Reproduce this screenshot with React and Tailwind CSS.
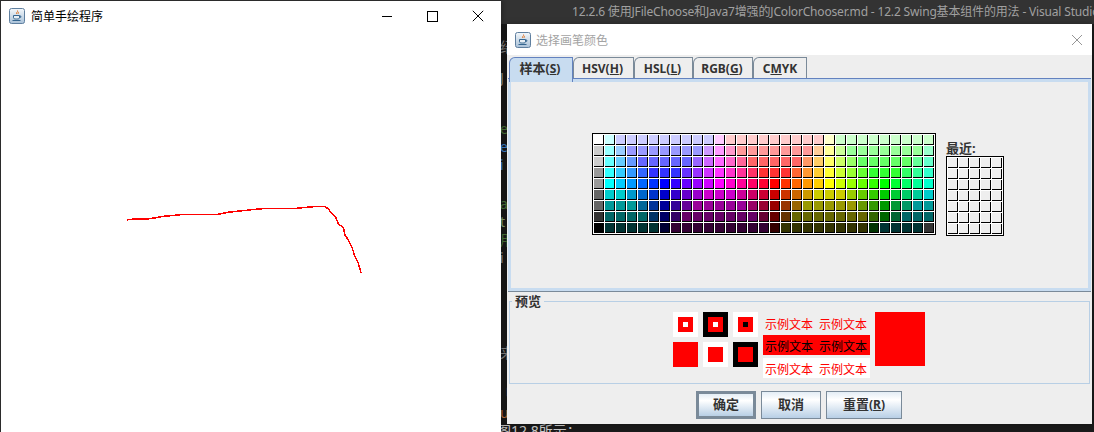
import React from "react";

const r = (c, n = 1) => Array(n).fill(c);
const rows = [
  [[255,255,255],[204,255,255],...r([204,204,255],9),[255,204,255],...r([255,204,204],9),[255,255,204],...r([204,255,204],9)],
  [[204,204,204],[153,255,255],[153,204,255],...r([153,153,255],7),[204,153,255],[255,153,255],[255,153,204],...r([255,153,153],7),[255,204,153],[255,255,153],[204,255,153],...r([153,255,153],7),[153,255,204]],
  [[204,204,204],[102,255,255],[102,204,255],[102,153,255],...r([102,102,255],5),[153,102,255],[204,102,255],[255,102,255],[255,102,204],[255,102,153],...r([255,102,102],5),[255,153,102],[255,204,102],[255,255,102],[204,255,102],[153,255,102],...r([102,255,102],5),[102,255,153],[102,255,204]],
  [[153,153,153],[51,255,255],[51,204,255],[51,153,255],[51,102,255],...r([51,51,255],3),[102,51,255],[153,51,255],[204,51,255],[255,51,255],[255,51,204],[255,51,153],[255,51,102],...r([255,51,51],3),[255,102,51],[255,153,51],[255,204,51],[255,255,51],[204,255,51],[153,255,51],[102,255,51],...r([51,255,51],3),[51,255,102],[51,255,153],[51,255,204]],
  [[153,153,153],[0,255,255],[0,204,255],[0,153,255],[0,102,255],[0,51,255],[0,0,255],[51,0,255],[102,0,255],[153,0,255],[204,0,255],[255,0,255],[255,0,204],[255,0,153],[255,0,102],[255,0,51],[255,0,0],[255,51,0],[255,102,0],[255,153,0],[255,204,0],[255,255,0],[204,255,0],[153,255,0],[102,255,0],[51,255,0],[0,255,0],[0,255,51],[0,255,102],[0,255,153],[0,255,204]],
  [[102,102,102],[0,204,204],[0,204,204],[0,153,204],[0,102,204],[0,51,204],[0,0,204],[51,0,204],[102,0,204],[153,0,204],[204,0,204],[204,0,204],[204,0,204],[204,0,153],[204,0,102],[204,0,51],[204,0,0],[204,51,0],[204,102,0],[204,153,0],[204,204,0],[204,204,0],[204,204,0],[153,204,0],[102,204,0],[51,204,0],[0,204,0],[0,204,51],[0,204,102],[0,204,153],[0,204,204]],
  [[102,102,102],...r([0,153,153],3),[0,102,153],[0,51,153],[0,0,153],[51,0,153],[102,0,153],...r([153,0,153],5),[153,0,102],[153,0,51],[153,0,0],[153,51,0],[153,102,0],...r([153,153,0],5),[102,153,0],[51,153,0],[0,153,0],[0,153,51],[0,153,102],...r([0,153,153],2)],
  [[51,51,51],...r([0,102,102],4),[0,51,102],[0,0,102],[51,0,102],...r([102,0,102],7),[102,0,51],[102,0,0],[102,51,0],...r([102,102,0],7),[51,102,0],[0,102,0],[0,102,51],...r([0,102,102],3)],
  [[0,0,0],...r([0,51,51],5),[0,0,51],...r([51,0,51],9),[51,0,0],...r([51,51,0],8),[0,51,0],...r([0,51,51],4),[51,51,51]],
];

const cjk = { fontFamily: '"Noto Sans CJK SC", sans-serif' };
const mixed = { fontFamily: '"Noto Sans", "Noto Sans CJK SC", sans-serif' };

function JavaIcon() {
  return (
    <svg width="16" height="16" viewBox="0 0 16 16" className="shrink-0">
      <defs>
        <linearGradient id="jg" x1="0" y1="0" x2="0" y2="1">
          <stop offset="0" stopColor="#f4f8fb" />
          <stop offset="1" stopColor="#a9c1d8" />
        </linearGradient>
      </defs>
      <rect x="0.5" y="0.5" width="15" height="15" rx="2" fill="url(#jg)" stroke="#5f7f9f" />
      <path d="M8.5 2.5c1 1.2-1.8 2-.8 3.4M10 4c-1 .8-1.2 1.2-.5 2" stroke="#e0762a" strokeWidth="1" fill="none" />
      <path d="M4.5 7.5h6v2.2c0 1-1 1.3-3 1.3s-3-.3-3-1.3zM10.5 8h1.3v1.3h-1.3" stroke="#35658f" strokeWidth="1" fill="#e8eff5" />
      <path d="M3.5 12.5h8" stroke="#35658f" strokeWidth="1" />
    </svg>
  );
}

function Swatch({ c }) {
  return <div className="w-[10px] h-[10px] border-r border-b border-black" style={{ backgroundColor: c }} />;
}

function Tab({ children, selected, w, noPad }) {
  return (
    <div
      className={
        (selected
          ? "relative z-10 h-[25px] -mb-[4px] border-b-0 border-[#6382bf] bg-[#c8dcf0] "
          : "h-[22px] border-[#7a8a99] border-b-[#6382bf] bg-[#eeeeee] ") +
        (noPad ? "" : "pr-[2px] ") +
        "flex items-start pt-[2px] justify-center border rounded-tl-[6px] text-[12px] font-bold leading-[17px] text-[#333333]"
      }
      style={{ ...mixed, width: w }}
    >
      {children}
    </div>
  );
}

function Btn({ w, def, children }) {
  return (
    <div
      className={`h-[28px] flex items-center justify-center bg-gradient-to-b from-[#e4edf5] via-[#ffffff] via-30% to-[#b8cfe5] text-[13px] font-bold text-[#333333] border-[#7a8a99] ${def ? "border-[3px]" : "border"}`}
      style={{ ...mixed, width: w }}
    >
      {children}
    </div>
  );
}

function Sq({ outer, mid, inner }) {
  return (
    <div className="w-[25px] h-[25px] flex items-center justify-center" style={{ backgroundColor: outer }}>
      {mid && (
        <div className="w-[15px] h-[15px] flex items-center justify-center" style={{ backgroundColor: mid }}>
          {inner && <div className="w-[5px] h-[5px]" style={{ backgroundColor: inner }} />}
        </div>
      )}
    </div>
  );
}

function SampleRow({ cls }) {
  return (
    <div className={`h-[20px] w-[107px] flex items-center pl-[2px] pt-[2px] gap-[6px] text-[12px] leading-[18px] ${cls}`} style={cjk}>
      <span>示例文本</span>
      <span>示例文本</span>
    </div>
  );
}

const fragments = [
  ["绍", 38, "#8a8a8a"], ["J", 69, "#9a9a9a"], ["e", 120, "#4d7a3c"], ["e", 138, "#3f86d6"], ["i", 156, "#3f86d6"],
  ["a", 195, "#4d7a3c"], ["t", 213, "#8aa878"], ["用", 231, "#4d7a3c"], ["i", 249, "#9a9a9a"], ["来", 344, "#8a8a8a"],
  ["刂", 384, "#8a8a8a"], ["u", 404, "#c0703a"],
];

const stroke = "127.3,220.3 129,219.3 147.7,219 156,217.7 163.3,216.3 171,215.7 185,214.3 217.7,214.3 227.7,212.3 236.7,211.3 246.7,210.3 255,209.3 263.3,208.7 296.7,208.3 313.3,206.7 325,206.3 328.3,209 331.7,213.3 336,217.7 338.3,224 343.3,227.3 345,235 348.3,240 352.3,248.3 355,256.7 358.3,263.3 361,273";

export default function App() {
  return (
    <div className="relative w-[1094px] h-[432px] overflow-hidden bg-[#1a1a1a]">
      {/* Editor behind the windows */}
      <div className="h-[24px] bg-[#333333] pl-[572px] flex items-center overflow-hidden whitespace-nowrap text-[12px] tracking-[-0.17px] text-[#a0a0a0]" style={mixed}>
        12.2.6 使用JFileChoose和Java7增强的JColorChooser.md - 12.2 Swing基本组件的用法 - Visual Studio
      </div>
      {fragments.map(([t, y, c], i) => (
        <span key={i} className="absolute left-[500px] text-[14px] leading-[18px]" style={{ ...mixed, top: y, color: c }}>
          {t}
        </span>
      ))}
      <div className="absolute left-[497px] top-[423px] text-[14px] leading-[16px] text-[#c8c8c8]" style={mixed}>
        图12.8所示：
      </div>

      {/* Drawing window */}
      <div className="absolute left-0 top-0 w-[501px] h-[432px] bg-white border-l border-t border-[#2b2b2b] shadow-[2px_0_6px_rgba(0,0,0,0.25)]">
        <div className="h-[30px] flex items-center pl-[8px] text-[12px] text-black" style={cjk}>
          <JavaIcon />
          <span className="ml-[6px]">简单手绘程序</span>
          <svg width="56" height="12" viewBox="0 0 56 12" className="ml-auto" stroke="#000" strokeWidth="1" fill="none" shapeRendering="crispEdges">
            <path d="M0 6.5h10" />
            <rect x="45.5" y="1.5" width="10" height="10" />
          </svg>
          <svg width="12" height="12" viewBox="0 0 12 12" className="ml-[34px] mr-[17px]" stroke="#000" strokeWidth="1" fill="none">
            <path d="M.8.8l10.4 10.4M11.2.8L.8 11.2" />
          </svg>
        </div>
        <svg className="absolute -left-px -top-px" width="500" height="432" fill="none" stroke="#ff0000" strokeWidth="1.5" shapeRendering="crispEdges">
          <polyline points={stroke} />
        </svg>
      </div>

      {/* Colour chooser dialog */}
      <div className="absolute left-[507px] top-[24px] w-[585px] h-[400px] bg-[#eeeeee] flex flex-col shadow-[0_0_6px_rgba(0,0,0,0.3)]">
        <div className="h-[31px] bg-white flex items-center pl-[8px] pr-[10px] text-[12px] text-[#a3a3a3]" style={cjk}>
          <JavaIcon />
          <span className="ml-[5px]">选择画笔颜色</span>
          <svg width="10" height="10" viewBox="0 0 10 10" className="ml-auto" stroke="#8a8a8a" strokeWidth="0.9" fill="none">
            <path d="M0 0l10 10M10 0L0 10" />
          </svg>
        </div>

        <div className="flex pl-[2px] pt-[2px]">
          <Tab selected w={64}>
            <span><span className="text-[13px]">样本</span>(<u>S</u>)</span>
          </Tab>
          <Tab w={61}><span>HSV(<u>H</u>)</span></Tab>
          <Tab w={59}><span>HSL(<u>L</u>)</span></Tab>
          <Tab w={60}><span>RGB(<u>G</u>)</span></Tab>
          <Tab w={54} noPad><span>C<u>M</u>YK</span></Tab>
        </div>

        <div className="mx-[1px] h-[214px] -mt-px border-t border-b border-t-[#6382bf] border-b-[#7a8a99]">
          <div className="h-full border-[3px] border-t-[3px] border-[#c8dcf0] flex items-end pl-[81px] pb-[53px] gap-[10px]">
            <div className="grid grid-cols-[repeat(31,10px)] gap-[1px] p-[1px] bg-white border border-black">
              {rows.flat().map((c, i) => (
                <Swatch key={i} c={`rgb(${c[0]},${c[1]},${c[2]})`} />
              ))}
            </div>
            <div className="flex flex-col -mb-[1px]">
              <div className="text-[13px] font-bold leading-[16px] text-[#333333]" style={mixed}>最近:</div>
              <div className="grid grid-cols-[repeat(5,10px)] gap-[1px] p-[1px] bg-white border border-black">
                {Array.from({ length: 35 }).map((_, i) => (
                  <Swatch key={i} c="#eeeeee" />
                ))}
              </div>
            </div>
          </div>
        </div>

        <div className="relative mx-[2px] mt-[9px] h-[83px] border border-[#b8cfe5] pl-[163px] pt-[10px] flex">
          <div className="absolute left-[2px] -top-[9px] px-[3px] bg-[#eeeeee] text-[13px] font-bold leading-[16px] text-[#333333]" style={cjk}>预览</div>
          <div className="grid grid-cols-[25px_25px_25px] grid-rows-[25px_25px] gap-[5px]">
            <Sq outer="#ffffff" mid="#ff0000" inner="#ffffff" />
            <Sq outer="#000000" mid="#ff0000" inner="#ffffff" />
            <Sq outer="#ffffff" mid="#ff0000" inner="#000000" />
            <Sq outer="#ff0000" />
            <Sq outer="#ffffff" mid="#ff0000" />
            <Sq outer="#000000" mid="#ff0000" />
          </div>
          <div className="ml-[5px] pt-[1px] flex flex-col gap-[2px]">
            <SampleRow cls="text-[#ff0000]" />
            <SampleRow cls="bg-[#ff0000] text-black" />
            <SampleRow cls="mt-[1px] bg-white text-[#ff0000]" />
          </div>
          <div className="ml-[5px] w-[50px] h-[54px] bg-[#ff0000]" />
        </div>

        <div className="mt-[7px] pl-[189px] flex gap-[5px]">
          <Btn w={60} def>确定</Btn>
          <Btn w={60}>取消</Btn>
          <Btn w={76}><span>重置<span className="text-[12px]">(<u>R</u>)</span></span></Btn>
        </div>
      </div>
    </div>
  );
}
